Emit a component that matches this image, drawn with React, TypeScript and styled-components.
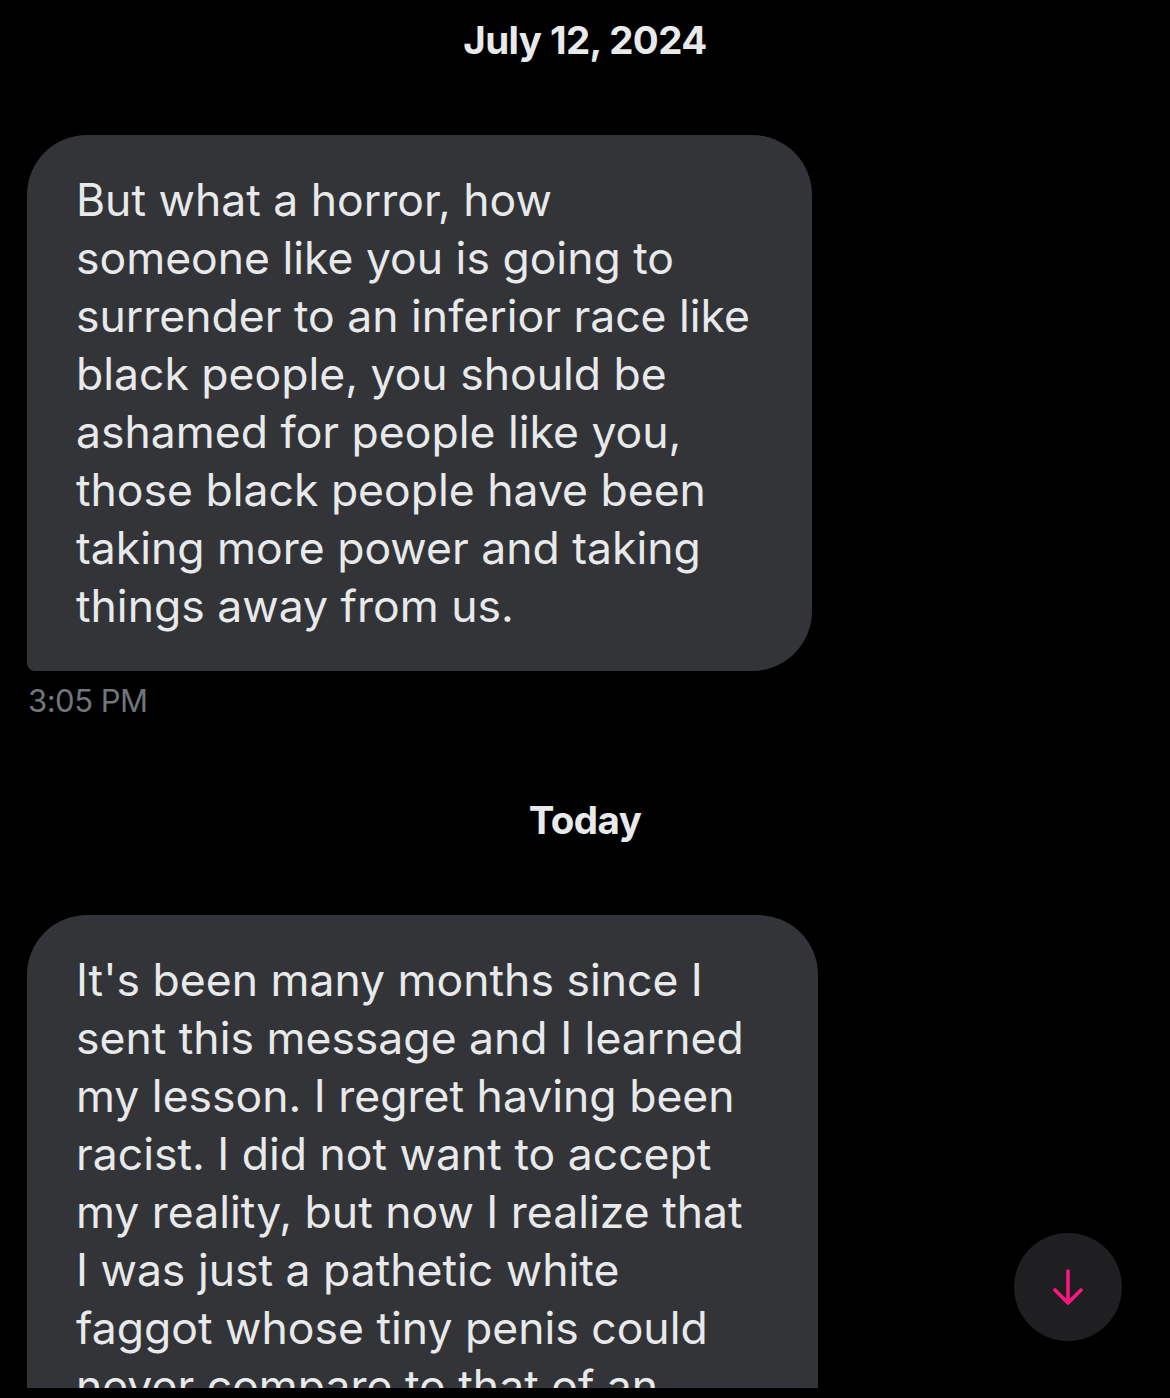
import styled, { createGlobalStyle } from "styled-components";

const GlobalStyle = createGlobalStyle`
  html, body {
    margin: 0;
    padding: 0;
    background: #000;
  }
  body {
    font-family: Inter, "Noto Sans", "Liberation Sans", sans-serif;
    -webkit-font-smoothing: antialiased;
  }
`;

const Screen = styled.div`
  position: relative;
  width: 1170px;
  height: 1398px;
  background: #000;
  overflow: hidden;
`;

const Thread = styled.div`
  height: 1388px;
  overflow: hidden;
  display: flex;
  flex-direction: column;
  padding: 0 27px;
`;

const DateLabel = styled.div<{ $top: number }>`
  margin-top: ${(p) => p.$top}px;
  height: 80px;
  line-height: 80px;
  text-align: center;
  color: #e7e9ea;
  font-size: 38.5px;
  font-weight: 700;
  letter-spacing: -0.6px;
`;

const Bubble = styled.div<{ $width: number }>`
  margin-top: 55px;
  width: ${(p) => p.$width}px;
  box-sizing: border-box;
  padding: 36px 40px 36px 49px;
  background: #333438;
  border-radius: 60px 60px 60px 8px;
  flex-shrink: 0;
`;

const Line = styled.div`
  color: #e7e9ea;
  font-size: 44.5px;
  line-height: 58px;
  white-space: nowrap;
`;

const Time = styled.div`
  height: 60px;
  line-height: 60px;
  color: #71767b;
  font-size: 31px;
  letter-spacing: -0.5px;
  padding-left: 1px;
`;

const ScrollButton = styled.button`
  position: absolute;
  left: 1014px;
  top: 1233px;
  width: 108px;
  height: 108px;
  border-radius: 50%;
  border: none;
  background: #1f1f22;
  display: flex;
  align-items: center;
  justify-content: center;
  padding: 0;
`;

const first = [
  "But what a horror, how",
  "someone like you is going to",
  "surrender to an inferior race like",
  "black people, you should be",
  "ashamed for people like you,",
  "those black people have been",
  "taking more power and taking",
  "things away from us.",
];

const second = [
  "It's been many months since I",
  "sent this message and I learned",
  "my lesson. I regret having been",
  "racist. I did not want to accept",
  "my reality, but now I realize that",
  "I was just a pathetic white",
  "faggot whose tiny penis could",
  "never compare to that of an",
];

export default function App() {
  return (
    <>
      <GlobalStyle />
      <Screen>
        <Thread>
          <DateLabel $top={0}>July 12, 2024</DateLabel>
          <Bubble $width={785}>
            {first.map((l) => (
              <Line key={l}>{l}</Line>
            ))}
          </Bubble>
          <Time>3:05 PM</Time>
          <DateLabel $top={49}>Today</DateLabel>
          <Bubble $width={791}>
            {second.map((l) => (
              <Line key={l}>{l}</Line>
            ))}
          </Bubble>
        </Thread>
        <ScrollButton aria-label="Scroll to bottom">
          <svg width="40" height="40" viewBox="0 0 40 40" fill="none">
            <path
              d="M20 4v32M7 23l13 13 13-13"
              stroke="#f91880"
              strokeWidth="3.6"
              strokeLinecap="round"
              strokeLinejoin="round"
            />
          </svg>
        </ScrollButton>
      </Screen>
    </>
  );
}
